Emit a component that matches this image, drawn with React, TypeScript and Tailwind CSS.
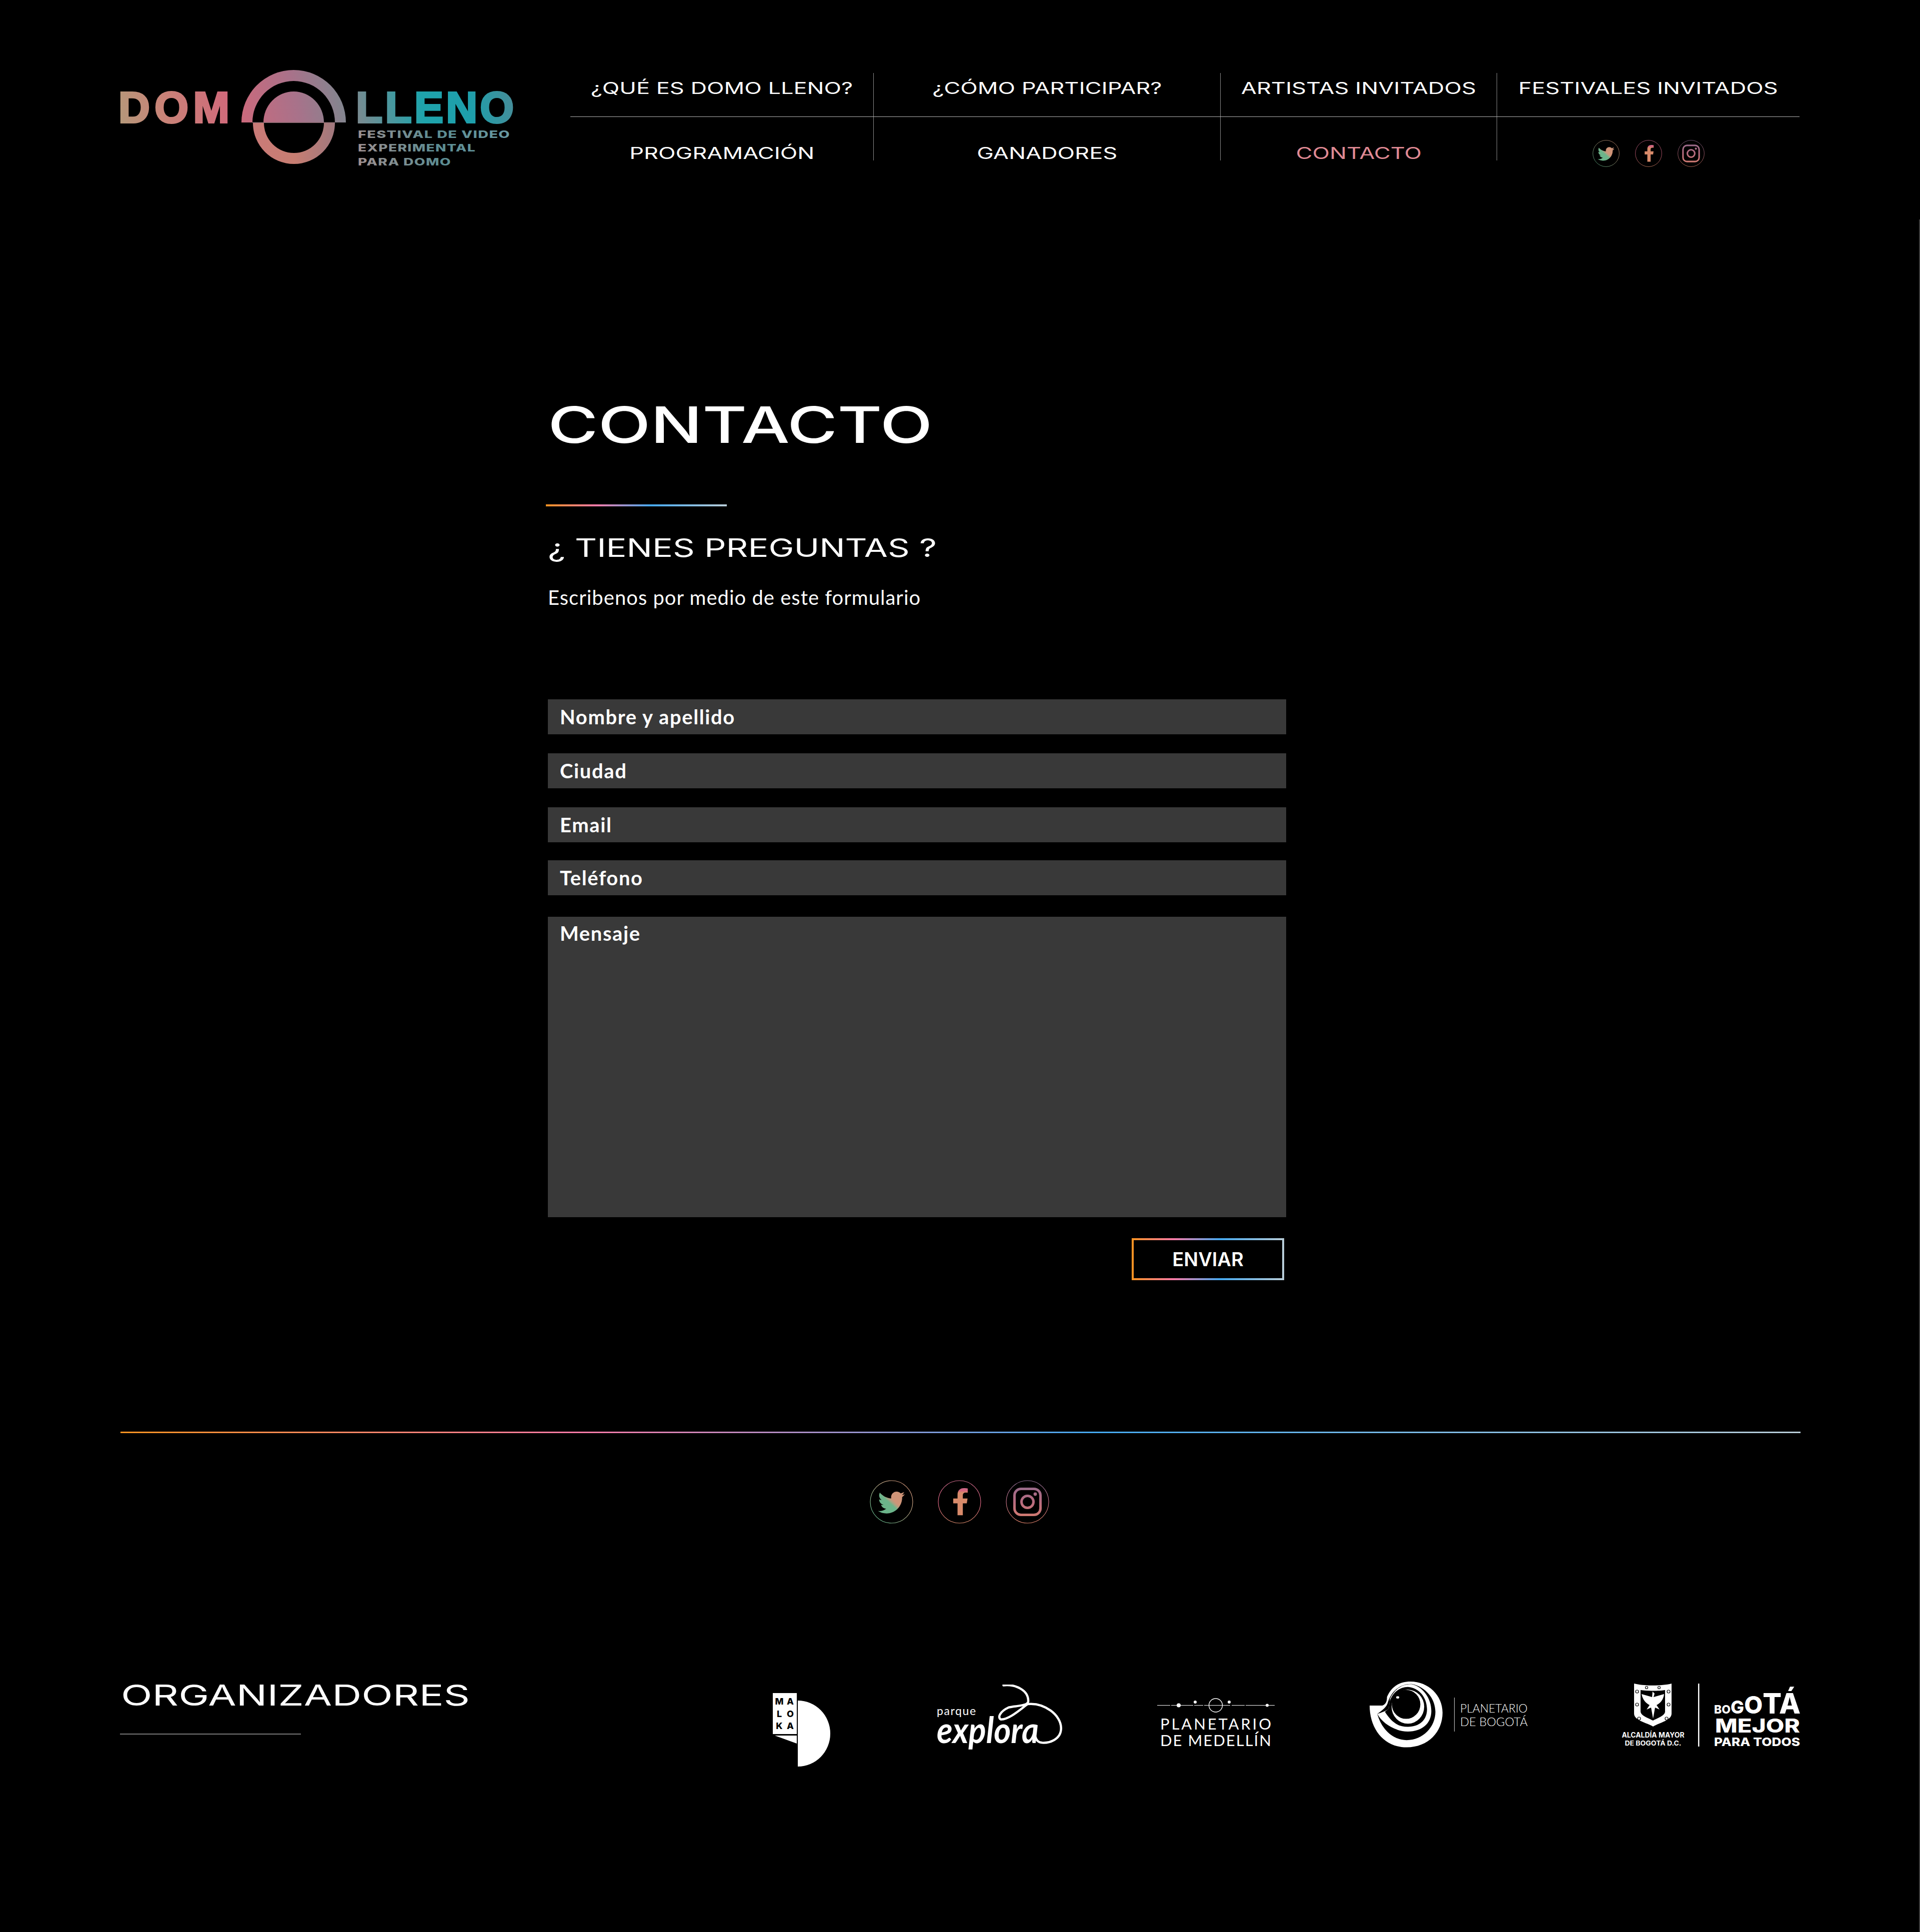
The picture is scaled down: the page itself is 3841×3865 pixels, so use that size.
import React from 'react';

const fieldClass =
  "flex h-[70px] items-center bg-[#393939] pl-[24px] font-[Lato,sans-serif] text-[40px] font-bold leading-none tracking-[1.6px] text-white";
const gradientClass = "bg-[linear-gradient(90deg,#ff9421_0%,#fb7aa6_27%,#45a9f0_58%,#b9cdd8_100%)]";
const navText = "inline-block scale-x-[1.41] whitespace-nowrap font-[Inter,sans-serif] text-[32px] font-normal leading-none";

const NavItem = ({ label, active, last }: { label: string; active?: boolean; last?: boolean }) => (
  <div className={`flex h-[87px] items-center justify-center pb-[26px] ${last ? "" : "border-r border-[#8a8a8a]"}`}>
    <span className={`${navText} ${active ? "text-[#e08a94]" : "text-white"}`}>{label}</span>
  </div>
);

const NavItemLow = ({ label, active, last }: { label: string; active?: boolean; last?: boolean }) => (
  <div className={`flex h-[87px] items-center justify-center pt-[59px] ${last ? "" : "border-r border-[#8a8a8a]"}`}>
    <span className={`${navText} ${active ? "text-[#e08a94]" : "text-white"}`}>{label}</span>
  </div>
);

const Twitter = ({ size, id }: { size: number; id: string }) => (
  <svg width={size} height={size} viewBox="0 0 87 87" fill="none">
    <defs>
      <linearGradient id={id} x1="10" y1="80" x2="75" y2="10" gradientUnits="userSpaceOnUse">
        <stop offset="0.1" stopColor="#6cb48a" />
        <stop offset="0.55" stopColor="#acA282" />
        <stop offset="1" stopColor="#cf9478" />
      </linearGradient>
    </defs>
    <circle cx="43.5" cy="43.5" r="42.5" stroke={`url(#${id})`} strokeWidth="1.2" />
    <g transform="translate(16.5 18) scale(0.105)" fill={`url(#${id})`}>
      <path d="M459.37 151.716c.325 4.548.325 9.097.325 13.645 0 138.72-105.583 298.558-298.558 298.558-59.452 0-114.68-17.219-161.137-47.106 8.447.974 16.568 1.299 25.34 1.299 49.055 0 94.213-16.568 130.274-44.832-46.132-.975-84.792-31.188-98.112-72.772 6.498.974 12.995 1.624 19.818 1.624 9.421 0 18.843-1.3 27.614-3.573-48.081-9.747-84.143-51.98-84.143-102.985v-1.299c13.969 7.797 30.214 12.67 47.431 13.319-28.264-18.843-46.781-51.005-46.781-87.391 0-19.492 5.197-37.36 14.294-52.954 51.655 63.675 129.3 105.258 216.365 109.807-1.624-7.797-2.599-15.918-2.599-24.04 0-57.828 46.782-104.934 104.934-104.934 30.213 0 57.502 12.67 76.67 33.137 23.715-4.548 46.456-13.32 66.599-25.34-7.798 24.366-24.366 44.833-46.132 57.827 21.117-2.273 41.584-8.122 60.426-16.243-14.292 20.791-32.161 39.308-52.628 54.253z" />
    </g>
  </svg>
);

const Facebook = ({ size, id }: { size: number; id: string }) => (
  <svg width={size} height={size} viewBox="0 0 87 87" fill="none">
    <defs>
      <linearGradient id={id} x1="43" y1="0" x2="43" y2="87" gradientUnits="userSpaceOnUse">
        <stop offset="0" stopColor="#c96a8a" />
        <stop offset="0.55" stopColor="#d5627e" />
        <stop offset="1" stopColor="#d88a6a" />
      </linearGradient>
    </defs>
    <circle cx="43.5" cy="43.5" r="42.5" stroke={`url(#${id})`} strokeWidth="1.2" />
    <g transform="translate(28.5 16) scale(0.106)" fill={`url(#${id})`}>
      <path d="M279.14 288l14.22-92.66h-88.91v-60.13c0-25.35 12.42-50.06 52.24-50.06h40.42V6.26S260.43 0 225.36 0c-73.22 0-121.08 44.38-121.08 124.72v70.62H22.89V288h81.39v224h100.17V288z" />
    </g>
  </svg>
);

const Instagram = ({ size, id }: { size: number; id: string }) => (
  <svg width={size} height={size} viewBox="0 0 87 87" fill="none">
    <defs>
      <linearGradient id={id} x1="43" y1="0" x2="43" y2="87" gradientUnits="userSpaceOnUse">
        <stop offset="0" stopColor="#8a6a90" />
        <stop offset="0.5" stopColor="#b86c80" />
        <stop offset="1" stopColor="#dc8068" />
      </linearGradient>
    </defs>
    <circle cx="43.5" cy="43.5" r="42.5" stroke={`url(#${id})`} strokeWidth="1.2" />
    <rect x="17.5" y="17.5" width="52" height="52" rx="13" stroke={`url(#${id})`} strokeWidth="5" />
    <circle cx="43.5" cy="43.5" r="12" stroke={`url(#${id})`} strokeWidth="5" />
    <circle cx="59" cy="28" r="3.4" fill={`url(#${id})`} />
  </svg>
);

const Logo = () => (
  <svg width="794" height="200" viewBox="0 0 794 200" className="shrink-0 overflow-visible">
    <defs>
      <linearGradient id="logoGrad" x1="0" y1="190" x2="800" y2="40" gradientUnits="userSpaceOnUse">
        <stop offset="0" stopColor="#b09c7a" />
        <stop offset="0.13" stopColor="#c98478" />
        <stop offset="0.3" stopColor="#d0687a" />
        <stop offset="0.46" stopColor="#a8728a" />
        <stop offset="0.6" stopColor="#7a8a90" />
        <stop offset="0.76" stopColor="#1fa3ab" />
        <stop offset="0.88" stopColor="#1e9fab" />
        <stop offset="1" stopColor="#4b8a96" />
      </linearGradient>
      <linearGradient id="logoRing" x1="270" y1="0" x2="434" y2="0" gradientUnits="userSpaceOnUse">
        <stop offset="0" stopColor="#c97a78" />
        <stop offset="0.5" stopColor="#c87e72" />
        <stop offset="1" stopColor="#a0787e" />
      </linearGradient>
      <linearGradient id="logoSub" x1="480" y1="190" x2="800" y2="120" gradientUnits="userSpaceOnUse">
        <stop offset="0" stopColor="#a09090" />
        <stop offset="0.5" stopColor="#5b8c92" />
        <stop offset="1" stopColor="#6a9aa4" />
      </linearGradient>
    </defs>
    <text x="1" y="105" fontFamily="Liberation Sans, sans-serif" fontWeight="700" fontSize="87" textLength="222" lengthAdjust="spacing" stroke="url(#logoGrad)" strokeWidth="4" fill="url(#logoGrad)">DOM</text>
    <path d="M247 105a104.5 105 0 0 1 209 0h-22a82.5 83 0 0 0-165 0z" fill="url(#logoGrad)" />
    <path d="M291 105a60.5 62 0 0 1 121 0z" fill="url(#logoGrad)" />
    <path d="M270 106a82 82 0 0 0 164 0h-22a60 60 0 0 1-120 0z" fill="url(#logoRing)" />
    <rect x="269" y="104.5" width="165" height="1.5" fill="#8a6a70" />
    <text x="476" y="105" fontFamily="Liberation Sans, sans-serif" fontWeight="700" fontSize="87" textLength="316" lengthAdjust="spacing" stroke="url(#logoGrad)" strokeWidth="4" fill="url(#logoGrad)">LLENO</text>
    <text x="480" y="136" fontFamily="Inter, sans-serif" fontWeight="800" fontSize="20" letterSpacing="1" textLength="305" lengthAdjust="spacingAndGlyphs" fill="url(#logoSub)">FESTIVAL DE VIDEO</text>
    <text x="480" y="163" fontFamily="Inter, sans-serif" fontWeight="800" fontSize="20" letterSpacing="1" textLength="236" lengthAdjust="spacingAndGlyphs" fill="url(#logoSub)">EXPERIMENTAL</text>
    <text x="480" y="191" fontFamily="Inter, sans-serif" fontWeight="800" fontSize="20" letterSpacing="1" textLength="187" lengthAdjust="spacingAndGlyphs" fill="url(#logoSub)">PARA DOMO</text>
  </svg>
);

const Maloka = () => (
  <svg width="115" height="147" viewBox="0 0 115 147" className="mt-[23px] shrink-0">
    <rect x="0" y="0" width="48" height="82" fill="#fff" />
    <g fontFamily="Inter, sans-serif" fontWeight="800" fontSize="18" fill="#000" textAnchor="middle">
      <text x="13" y="23">M</text>
      <text x="35" y="23">A</text>
      <text x="13" y="48">L</text>
      <text x="35" y="48">O</text>
      <text x="13" y="72">K</text>
      <text x="35" y="72">A</text>
    </g>
    <path d="M4 85h44v16z" fill="#fff" />
    <path d="M50 15a65 66 0 0 1 0 132z" fill="#fff" />
  </svg>
);

const Explora = () => (
  <svg width="252" height="146" viewBox="0 0 252 146" fill="none" className="mt-[6px] shrink-0">
    <text x="0" y="61" fontFamily="Lato, sans-serif" fontSize="23" letterSpacing="1.6" fill="#fff">parque</text>
    <text x="0" y="117" fontFamily="Lato, sans-serif" fontStyle="italic" fontWeight="700" fontSize="73" textLength="204" lengthAdjust="spacingAndGlyphs" fill="#fff">explora</text>
    <path
      d="M133.5 1.5C157-1 184 10.7 183 34C181.7 42.3 161.6 42.3 143.8 45.7C126 54 121.4 65.7 128 69.7C143.8 70.7 166 50.7 181.7 39C215 35.7 248.7 60.7 248.7 87.3C248.7 110.7 224 117.3 210.7 116.3C203 115.5 199.6 112 197 104"
      stroke="#fff"
      strokeWidth="4.5"
      strokeLinecap="round"
    />
  </svg>
);

const Medellin = () => (
  <svg width="236" height="104" viewBox="0 0 236 104" fill="none" className="mt-[33px] shrink-0">
    <path d="M0 14.5H235" stroke="#fff" strokeWidth="1.2" strokeDasharray="26 2 44 2 18 2 52 3" />
    <circle cx="117" cy="14.5" r="13.5" stroke="#fff" strokeWidth="1.4" />
    <circle cx="43" cy="14.5" r="4" fill="#fff" />
    <circle cx="76" cy="8" r="3" fill="#fff" />
    <circle cx="144" cy="8" r="3" fill="#fff" />
    <circle cx="220" cy="14.5" r="3" fill="#fff" />
    <text x="6" y="63" fontFamily="Lato, sans-serif" fontSize="31" textLength="222" lengthAdjust="spacing" fill="#fff">PLANETARIO</text>
    <text x="6" y="96" fontFamily="Lato, sans-serif" fontSize="31" textLength="222" lengthAdjust="spacing" fill="#fff">DE MEDELLÍN</text>
  </svg>
);

const PlanetarioBogota = () => (
  <svg width="320" height="132" viewBox="0 0 320 132" className="shrink-0 overflow-visible">
    <g transform="scale(0.51 0.333) translate(-900 -68)">
      <path d="M900 212C900 350 955 463 1045 463C1130 463 1186 370 1186 255C1186 150 1130 68 1060 68C1015 68 985 100 968 160C968 175 968 200 950 212Z" fill="#fff" />
      <path d="M930 262C945 350 990 420 1045 420C1110 420 1158 340 1158 250C1158 170 1120 100 1065 82C1030 80 990 110 972 190C968 220 950 240 930 262Z" fill="#000" />
      <path d="M930 262C950 320 1000 368 1050 368C1105 368 1142 320 1142 245C1142 170 1110 100 1065 84C1035 80 1000 105 980 170L975 230C965 245 945 255 930 262Z" fill="#fff" />
      <path d="M960 250C985 310 1010 340 1050 340C1095 340 1125 300 1125 235C1125 165 1095 105 1050 100C1020 100 990 130 978 190L975 230Z" fill="#000" />
      <ellipse cx="1050" cy="219" rx="64" ry="102" fill="#fff" />
      <ellipse cx="1043" cy="205" rx="56" ry="87" fill="#000" />
      <ellipse cx="1010" cy="163" rx="6" ry="7" fill="#fff" />
    </g>
    <rect x="169" y="32" width="1" height="68" fill="#d0d0d0" />
    <text x="181" y="62" fontFamily="Lato, sans-serif" fontWeight="300" fontSize="24" textLength="135" lengthAdjust="spacingAndGlyphs" fill="#fff">PLANETARIO</text>
    <text x="181" y="89" fontFamily="Lato, sans-serif" fontWeight="300" fontSize="24" textLength="135" lengthAdjust="spacingAndGlyphs" fill="#fff">DE BOGOTÁ</text>
  </svg>
);

const Alcaldia = () => (
  <svg width="358" height="130" viewBox="0 0 358 130" fill="none" className="mt-[4px] shrink-0 overflow-visible">
    <path d="M25 0C45 5 80 5 100 0V60C100 74 76 78 63 86C50 78 25 74 25 60Z" fill="#fff" />
    <path d="M38 13C50 15 75 15 87 13V56C87 64 72 69 63 74C53 69 38 64 38 56Z" fill="#000" />
    <path d="M62 16L66 20L64 27L85 21C84 33 76 40 70 43L76 52L67 48L63 70L59 48L50 52L56 43C50 40 42 33 40 21L61 27Z" fill="#fff" />
    <circle cx="31" cy="16" r="3" stroke="#000" strokeWidth="1.2" />
    <circle cx="94" cy="16" r="3" stroke="#000" strokeWidth="1.2" />
    <circle cx="31" cy="42" r="3" stroke="#000" strokeWidth="1.2" />
    <circle cx="94" cy="42" r="3" stroke="#000" strokeWidth="1.2" />
    <circle cx="35" cy="70" r="3" stroke="#000" strokeWidth="1.2" />
    <circle cx="90" cy="70" r="3" stroke="#000" strokeWidth="1.2" />
    <circle cx="50" cy="8" r="2.5" stroke="#000" strokeWidth="1.2" />
    <circle cx="75" cy="8" r="2.5" stroke="#000" strokeWidth="1.2" />
    <text x="63" y="108" fontFamily="Inter, sans-serif" fontWeight="700" fontSize="14" textAnchor="middle" textLength="125" lengthAdjust="spacingAndGlyphs" fill="#fff">ALCALDÍA MAYOR</text>
    <text x="63" y="124" fontFamily="Inter, sans-serif" fontWeight="700" fontSize="13" textAnchor="middle" textLength="113" lengthAdjust="spacingAndGlyphs" fill="#fff">DE BOGOTÁ D.C.</text>
    <rect x="153" y="0" width="2.5" height="126" fill="#fff" />
    <text x="185" y="60" fontFamily="Inter, sans-serif" fontWeight="800" fill="#fff">
      <tspan fontSize="23">BO</tspan>
      <tspan fontSize="36">G</tspan>
      <tspan fontSize="48">O</tspan>
      <tspan fontSize="56">TÁ</tspan>
    </text>
    <text x="187" y="98" fontFamily="Inter, sans-serif" fontWeight="800" fontSize="38" textLength="170" lengthAdjust="spacingAndGlyphs" fill="#fff">MEJOR</text>
    <text x="185" y="125" fontFamily="Inter, sans-serif" fontWeight="800" fontSize="23" textLength="172" lengthAdjust="spacingAndGlyphs" fill="#fff">PARA TODOS</text>
  </svg>
);

export default function App() {
  return (
    <div className="relative h-[3865px] w-full overflow-hidden bg-black">
      <div className="absolute right-0 top-[439px] h-[3426px] w-[2px] bg-[#3a3a3a]" />

      {/* Header */}
      <header className="flex pl-[236px] pt-[140px]">
        <Logo />
        <nav className="ml-[111px] mt-[6px] grid h-[174px] w-[2459px] grid-cols-[607px_694px_553px_605px]">
          <div className="col-span-4 grid grid-cols-[607px_694px_553px_605px] border-b border-[#b5b5b5]">
            <NavItem label="¿QUÉ ES DOMO LLENO?" />
            <NavItem label="¿CÓMO PARTICIPAR?" />
            <NavItem label="ARTISTAS INVITADOS" />
            <NavItem label="FESTIVALES INVITADOS" last />
          </div>
          <NavItemLow label="PROGRAMACIÓN" />
          <NavItemLow label="GANADORES" />
          <NavItemLow label="CONTACTO" active />
          <div className="flex h-[87px] items-center justify-center gap-[31px] pt-[59px]">
            <Twitter size={54} id="tw-top" />
            <Facebook size={54} id="fb-top" />
            <Instagram size={54} id="ig-top" />
          </div>
        </nav>
      </header>

      {/* Contact form */}
      <main className="ml-[1096px] mt-[460px] w-[1477px]">
        <h1 className="origin-left scale-x-[1.37] whitespace-nowrap font-[Inter,sans-serif] text-[100px] font-medium leading-none text-white">
          CONTACTO
        </h1>
        <div className={`-ml-[4px] mt-[109px] h-[4px] w-[362px] ${gradientClass}`} />
        <h2 className="mt-[58px] origin-left scale-x-[1.365] whitespace-nowrap font-[Inter,sans-serif] text-[50px] leading-none text-white">
          ¿ TIENES PREGUNTAS ?
        </h2>
        <p className="mt-[54px] whitespace-nowrap font-[Lato,sans-serif] text-[40px] font-normal leading-none tracking-[1px] text-white">
          Escribenos por medio de este formulario
        </p>

        <form className="mt-[184px] flex flex-col">
          <div className={fieldClass}>Nombre y apellido</div>
          <div className={`${fieldClass} mt-[38px]`}>Ciudad</div>
          <div className={`${fieldClass} mt-[38px]`}>Email</div>
          <div className={`${fieldClass} mt-[36px]`}>Teléfono</div>
          <div className="mt-[43px] h-[601px] bg-[#393939] pl-[24px] pt-[13px] font-[Lato,sans-serif] text-[40px] font-bold leading-none tracking-[1.6px] text-white">
            Mensaje
          </div>
          <div className="mt-[42px] flex justify-end pr-[4px]">
            <div className={`h-[84px] w-[305px] p-[4px] ${gradientClass}`}>
              <button type="button" className="flex h-full w-full items-center justify-center bg-black font-[Inter,sans-serif] text-[38px] font-semibold leading-none text-white">
                ENVIAR
              </button>
            </div>
          </div>
        </form>
      </main>

      {/* Footer */}
      <footer className="mt-[303px] px-[240px]">
        <div className={`ml-[1px] h-[3px] w-[3361px] ${gradientClass}`} />
        <div className="mt-[94px] flex justify-center gap-[49px] pr-[2px]">
          <Twitter size={87} id="tw-foot" />
          <Facebook size={87} id="fb-foot" />
          <Instagram size={87} id="ig-foot" />
        </div>
        <div className="mt-[316px] flex">
          <div className="w-[1306px] shrink-0">
            <h2 className="-mt-[2px] ml-[2px] origin-left scale-x-[1.41] whitespace-nowrap font-[Inter,sans-serif] text-[58px] leading-none text-white">
              ORGANIZADORES
            </h2>
            <div className="mt-[48px] h-[2px] w-[362px] bg-[#777777]" />
          </div>
          <Maloka />
          <div className="ml-[213px]"><Explora /></div>
          <div className="ml-[189px]"><Medellin /></div>
          <div className="ml-[189px]"><PlanetarioBogota /></div>
          <div className="ml-[184px]"><Alcaldia /></div>
        </div>
      </footer>
    </div>
  );
}
